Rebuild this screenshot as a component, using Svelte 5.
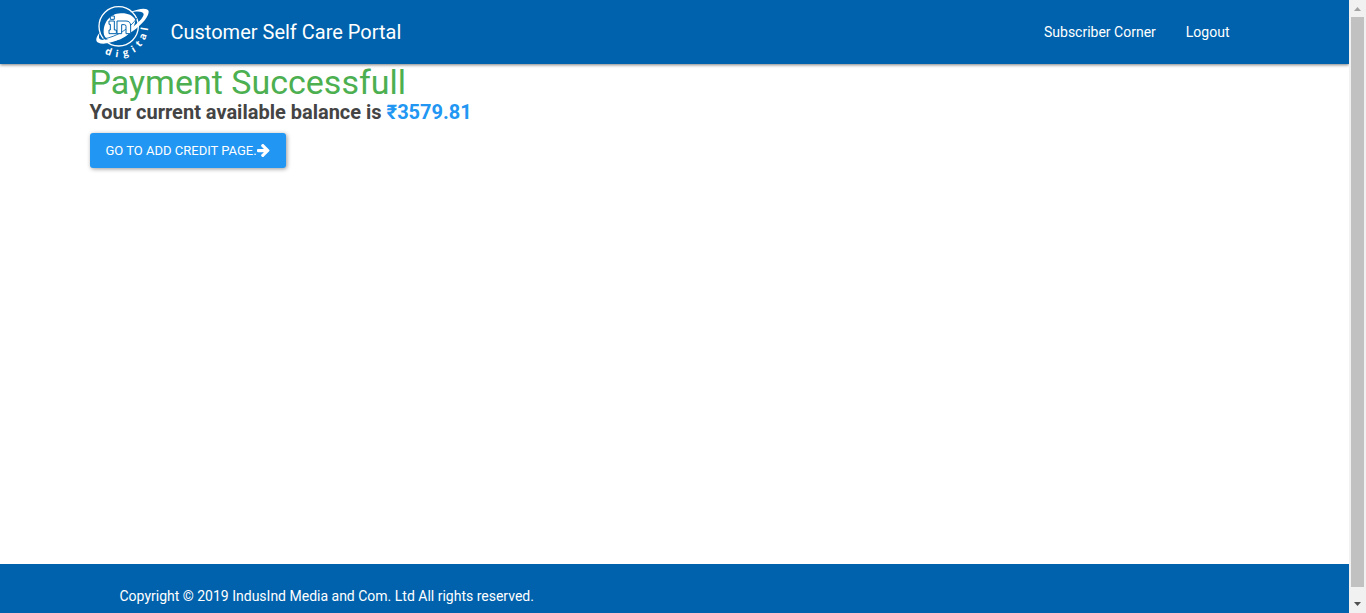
<script>
  const year = 2019;
  const balance = '3579.81';
  const arc = [
    { c: 'd', x: 71, y: 157, r: 20 },
    { c: 'i', x: 97, y: 164, r: 8 },
    { c: 'g', x: 123, y: 160, r: -12 },
    { c: 'i', x: 147, y: 150, r: -30 },
    { c: 't', x: 164, y: 132, r: -48 },
    { c: 'a', x: 176, y: 110, r: -68 },
    { c: 'l', x: 182, y: 87, r: -80 }
  ];
</script>

<div class="window">
  <div class="page">
    <header>
      <div class="container bar">
        <a class="brand" href="#home">
          <svg class="logo" viewBox="28 12 168 168" aria-label="in digital" role="img">
            <circle cx="102" cy="79" r="59" fill="none" stroke="#fff" stroke-width="4" />
            <path d="M58 104C53 70 75 41 108 40C128 39 144 45 152 60C150 90 121 119 88 123C74 123 63 116 58 104Z" fill="#fff" />
            <path d="M136 37C164 25 187 23 192 33C196 64 108 130 56 131C32 131 28 119 46 97C39 115 44 121 58 120C104 117 176 64 177 43C176 34 161 33 136 37Z" fill="#fff" />
            <path d="M157 54C137 84 96 111 55 117" fill="none" stroke="#0062ac" stroke-width="2.5" />
            <g fill="#fff" stroke="#0062ac" stroke-width="3">
              <path d="M77 48H89V58H77ZM73 63H89V90H95V101H73V90H77V73H73Z" />
              <path d="M97 63H124Q138 63 138 78V101H124V79Q124 74 119 74H111V101H97Z" />
            </g>
            {#each arc as l}
              <text transform="translate({l.x} {l.y}) rotate({l.r})" text-anchor="middle" dy="8">{l.c}</text>
            {/each}
          </svg>
          <span>Customer Self Care Portal</span>
        </a>
        <nav>
          <a href="#subscriber">Subscriber Corner</a>
          <a href="#logout">Logout</a>
        </nav>
      </div>
    </header>
    <main class="container">
      <h1>Payment Successfull</h1>
      <h2>Your current available balance is <span>₹{balance}</span></h2>
      <button type="button">Go to add credit page.<svg viewBox="0 128 1536 1536" aria-hidden="true"><path fill="currentColor" d="M1472 896q0 54-37 91l-651 651q-39 37-91 37-51 0-90-37l-75-75q-38-38-38-91t38-91l293-293h-704q-52 0-84.5-37.5t-32.5-90.5v-128q0-53 32.5-90.5t84.5-37.5h704l-293-294q-38-36-38-90t38-90l75-75q38-38 90-38 53 0 91 38l651 651q37 35 37 90z" /></svg></button>
    </main>
    <footer>
      <div class="container"><p>Copyright © {year} IndusInd Media and Com. Ltd All rights reserved.</p></div>
    </footer>
  </div>
  <div class="scroll" aria-hidden="true">
    <svg viewBox="0 0 17 17"><path d="M5 11L8.5 7L12 11Z" fill="#a3a3a3" /></svg>
    <div class="thumb"></div>
    <svg class="end" viewBox="0 0 17 17"><path d="M5 6H12L8.5 10Z" fill="#505050" /></svg>
  </div>
</div>

<style>
  :global(body) {
    margin: 0;
    background: #fff;
  }
  .window {
    display: flex;
    height: 100vh;
    overflow: hidden;
    font-family: Roboto, sans-serif;
    color: #444;
  }
  .page {
    flex: 1;
    min-width: 0;
    display: flex;
    flex-direction: column;
  }
  .container {
    box-sizing: border-box;
    width: 100%;
    max-width: 1170px;
    margin: 0 auto;
  }
  header {
    background: #0062ac;
    box-shadow: 0 1px 3px rgba(0, 0, 0, 0.5);
  }
  .bar {
    display: flex;
    align-items: center;
    justify-content: space-between;
    height: 64px;
    padding: 0 30px 0 4px;
  }
  a {
    color: #fff;
    text-decoration: none;
  }
  .brand {
    display: flex;
    align-items: center;
    gap: 21px;
    font-size: 20px;
  }
  .logo {
    width: 56px;
    height: 56px;
  }
  .logo text {
    fill: #fff;
    font-family: "Open Sans", sans-serif;
    font-size: 30px;
    font-weight: 700;
  }
  nav {
    display: flex;
    gap: 30px;
    font-size: 14px;
  }
  main {
    flex: 1;
  }
  h1 {
    margin: 0;
    font-size: 34px;
    font-weight: 400;
    line-height: 36px;
    color: #4caf50;
  }
  h2 {
    margin: 0 0 9px;
    font-size: 20px;
    font-weight: 700;
    line-height: 24px;
  }
  h2 span {
    color: #2196f3;
  }
  button {
    display: flex;
    align-items: center;
    padding: 0 16px;
    border: 0;
    border-radius: 3px;
    background: #2196f3;
    box-shadow: 1px 1px 4px rgba(0, 0, 0, 0.4);
    color: #fff;
    font-family: inherit;
    font-size: 13px;
    line-height: 35px;
    text-transform: uppercase;
    cursor: pointer;
  }
  button svg {
    width: 13px;
    height: 13px;
  }
  footer {
    padding: 22px 0 7px;
    background: #0062ac;
    color: #fff;
    font-size: 14px;
    line-height: 20px;
  }
  footer p {
    margin: 0;
    padding: 0 30px;
  }
  .scroll {
    display: flex;
    flex-direction: column;
    width: 17px;
    background: #f1f1f1;
  }
  .scroll svg {
    width: 17px;
    height: 17px;
  }
  .thumb {
    flex: 1;
    margin: 0 2px;
    background: #c1c1c1;
  }
  .scroll .end {
    margin-top: 9px;
  }
</style>
